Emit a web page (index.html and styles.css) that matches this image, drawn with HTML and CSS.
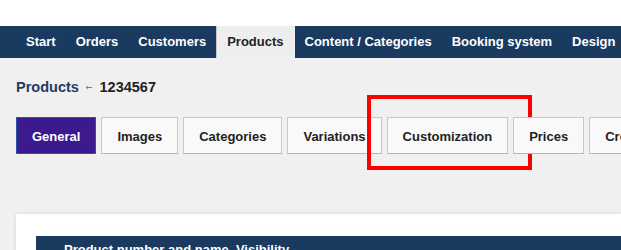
FILE: index.html
```html
<!DOCTYPE html>
<html lang="en">
<head>
  <meta charset="UTF-8" />
  <title>Products - 1234567</title>
  <link rel="stylesheet" href="styles.css">
</head>
<body>
  <div class="topbar"></div>
  <nav class="mainnav">
    <a href="#">Start</a>
    <a href="#">Orders</a>
    <a href="#">Customers</a>
    <a href="#" class="active">Products</a>
    <a href="#">Content / Categories</a>
    <a href="#">Booking system</a>
    <a href="#">Design</a>
  </nav>
  <div class="content">
    <div class="crumbs">
      <a href="#">Products</a>
      <span class="sep">&#8592;</span>
      <span class="current">1234567</span>
    </div>
    <div class="tabs">
      <a href="#" class="tab active">General</a>
      <a href="#" class="tab">Images</a>
      <a href="#" class="tab">Categories</a>
      <a href="#" class="tab">Variations</a>
      <a href="#" class="tab marked">Customization</a>
      <a href="#" class="tab">Prices</a>
      <a href="#" class="tab">Cross-selling</a>
    </div>
    <div class="panel">
      <div class="panel-head">Product number and name, Visibility</div>
    </div>
  </div>
</body>
</html>
```

FILE: styles.css
```css
body {
  margin: 0;
  font-family: "Liberation Sans", Arial, sans-serif;
  background: #f0f0f0;
  overflow: hidden;
  height: 250px;
}
.topbar {
  height: 26px;
  background: #fff;
}
.mainnav {
  display: flex;
  height: 32px;
  padding-left: 16px;
  background: #1a3a60;
  white-space: nowrap;
  overflow: hidden;
}
.mainnav a {
  display: block;
  padding: 0 10px;
  line-height: 32px;
  font-size: 13px;
  font-weight: bold;
  color: #fff;
  text-decoration: none;
}
.mainnav a.active {
  background: #eeeeee;
  color: #222;
  border-left: 1px solid #c8c8c8;
  padding: 0 11px 0 10px;
}
.content {
  padding: 0 16px;
}
.crumbs {
  padding-top: 19px;
  height: 20px;
  font-size: 14.5px;
  font-weight: bold;
  display: flex;
  align-items: center;
}
.crumbs a {
  color: #1f3d63;
  text-decoration: none;
}
.crumbs .sep {
  font-family: "DejaVu Sans", sans-serif;
  font-size: 8px;
  color: #6a7f99;
  margin: 0 7px;
}
.crumbs .current {
  color: #222;
}
.tabs {
  display: flex;
  gap: 5px;
  margin-top: 20px;
  white-space: nowrap;
}
.tab {
  position: relative;
  display: block;
  height: 35px;
  line-height: 37px;
  padding: 0 15px;
  font-size: 13px;
  font-weight: bold;
  color: #222;
  text-decoration: none;
  background: #f9f9f9;
  border: 1px solid #c8c8c8;
  border-bottom-color: #b4b4b4;
}
.tab.active {
  background: #3c1a8e;
  border-color: #245aa0;
  color: #fff;
}
.tab.marked::after {
  content: "";
  position: absolute;
  left: -21px;
  right: -25px;
  top: -23px;
  bottom: -17px;
  border: 4px solid #ff0000;
}
.panel {
  margin-top: 60px;
  background: #fff;
  box-shadow: 0 0 4px rgba(0, 0, 0, 0.12);
  padding: 22px 0 0 20px;
  margin-right: -16px;
}
.panel-head {
  background: #1a3a60;
  color: #fff;
  font-size: 13px;
  font-weight: bold;
  padding: 6px 28px;
  height: 30px;
}
```
